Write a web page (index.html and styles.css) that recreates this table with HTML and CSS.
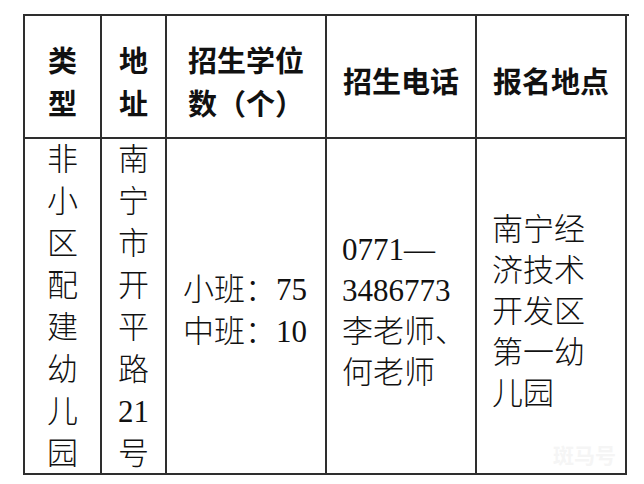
FILE: index.html
```html
<!DOCTYPE html>
<html lang="zh-CN">
<head>
<meta charset="utf-8">
<title>招生信息</title>
<link rel="stylesheet" href="styles.css">
</head>
<body>
<div class="page">
  <div class="table">
    <div class="cell head"><span>类</span><span>型</span></div>
    <div class="cell head"><span>地</span><span>址</span></div>
    <div class="cell head"><span>招生学位</span><span>数（个）</span></div>
    <div class="cell head"><span>招生电话</span></div>
    <div class="cell head last"><span>报名地点</span></div>

    <div class="cell body stack"><span>非</span><span>小</span><span>区</span><span>配</span><span>建</span><span>幼</span><span>儿</span><span>园</span></div>
    <div class="cell body stack"><span>南</span><span>宁</span><span>市</span><span>开</span><span>平</span><span>路</span><span>21</span><span>号</span></div>
    <div class="cell body mid seats"><span>小班：75</span><span>中班：10</span></div>
    <div class="cell body mid text"><span>0771—</span><span>3486773</span><span>李老师、</span><span>何老师</span></div>
    <div class="cell body mid text last"><span>南宁经</span><span>济技术</span><span>开发区</span><span>第一幼</span><span>儿园</span></div>
  </div>
  <div class="watermark">斑马号</div>
</div>
</body>
</html>
```

FILE: styles.css
```css
html, body {
  margin: 0;
  padding: 0;
  background: #ffffff;
}

.page {
  position: relative;
  width: 644px;
  height: 484px;
  padding: 14px 0 0 23px;
  box-sizing: border-box;
}

.table {
  display: grid;
  grid-template-columns: 77px 65px 160px 150px 150px;
  grid-template-rows: 123px 336px;
  width: 604px;
  border-left: 2px solid #2e2e2e;
  border-top: 2px solid #2e2e2e;
  color: #111111;
}

.cell {
  display: flex;
  flex-direction: column;
  border-right: 2px solid #2e2e2e;
  border-bottom: 2px solid #2e2e2e;
  box-sizing: border-box;
  white-space: nowrap;
  overflow: visible;
}

.cell span {
  display: block;
}

.head {
  justify-content: center;
  align-items: center;
  padding-top: 8px;
  font-family: "Noto Sans CJK SC", "Noto Sans", sans-serif;
  font-weight: 700;
  font-size: 29px;
  line-height: 43px;
}

.body {
  font-family: "Liberation Serif", "Noto Sans CJK SC", serif;
  font-weight: 300;
  font-size: 31px;
}

.stack {
  align-items: center;
  justify-content: flex-start;
  line-height: 42px;
}

.mid {
  justify-content: center;
  align-items: flex-start;
  padding: 10px 0 0 15px;
}

.seats {
  line-height: 42px;
  padding-left: 16px;
}

.text {
  line-height: 41px;
}

.watermark {
  position: absolute;
  left: 553px;
  top: 440px;
  font-family: "Noto Sans CJK SC", sans-serif;
  font-weight: 700;
  font-size: 21px;
  line-height: 28px;
  color: #f5f5f5;
}
```
